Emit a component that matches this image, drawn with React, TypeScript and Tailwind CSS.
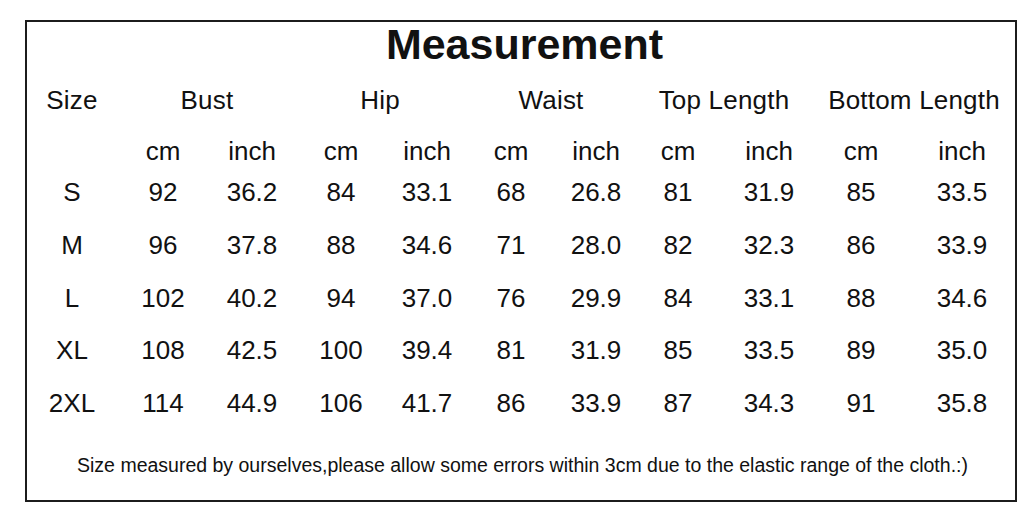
const cols = "grid grid-cols-[88px_94px_84px_94px_78px_90px_80px_84px_98px_86px_116px] ml-[1px]";

const rows: string[][] = [
  ["S", "92", "36.2", "84", "33.1", "68", "26.8", "81", "31.9", "85", "33.5"],
  ["M", "96", "37.8", "88", "34.6", "71", "28.0", "82", "32.3", "86", "33.9"],
  ["L", "102", "40.2", "94", "37.0", "76", "29.9", "84", "33.1", "88", "34.6"],
  ["XL", "108", "42.5", "100", "39.4", "81", "31.9", "85", "33.5", "89", "35.0"],
  ["2XL", "114", "44.9", "106", "41.7", "86", "33.9", "87", "34.3", "91", "35.8"],
];

const units = ["", "cm", "inch", "cm", "inch", "cm", "inch", "cm", "inch", "cm", "inch"];

export default function App() {
  return (
    <div className="w-[1024px] h-[519px] bg-white pt-[20px] pl-[25px] text-[#111] font-['Liberation_Sans',Arial,sans-serif]">
      <div className="w-[992px] h-[482px] border-2 border-[#1c1c1c]">
        <h1 className="mt-[1px] pl-[7px] text-center text-[43px] leading-[43px] font-bold">Measurement</h1>

        <div className={`${cols} mt-[21px] text-[26px] leading-[26px] text-center whitespace-nowrap tracking-[0.2px]`}>
          <div>Size</div>
          <div className="col-span-2 pl-[4px]">Bust</div>
          <div className="col-span-2">Hip</div>
          <div className="col-span-2">Waist</div>
          <div className="col-span-2 pr-[6px]">Top Length</div>
          <div className="col-span-2 pr-[10px]">Bottom Length</div>
        </div>

        <div className={`${cols} mt-[25px] text-[26px] leading-[26px] text-center`}>
          {units.map((u, i) => (
            <div key={i}>{u}</div>
          ))}
        </div>

        <div className="mt-[15px] flex flex-col gap-[26.75px]">
          {rows.map((r) => (
            <div key={r[0]} className={`${cols} text-[26px] leading-[26px] text-center`}>
              {r.map((v, i) => (
                <div key={i}>{v}</div>
              ))}
            </div>
          ))}
        </div>

        <p className="mt-[39.5px] pl-[3px] text-center text-[19.5px] leading-[19.5px] whitespace-nowrap">
          Size measured by ourselves,please allow some errors within 3cm due to the elastic range of the cloth.:)
        </p>
      </div>
    </div>
  );
}
